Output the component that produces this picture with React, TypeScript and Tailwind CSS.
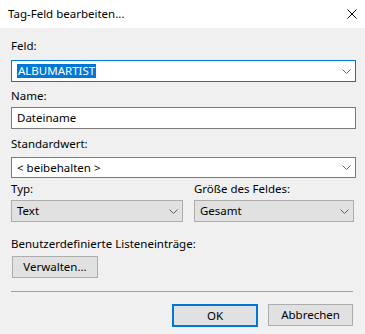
const FONT = "font-['Segoe_UI','Noto_Sans',sans-serif]";

function Chevron() {
  return (
    <svg width="9" height="5" viewBox="0 0 9 5" className="shrink-0">
      <path d="M0.5 0.5L4.5 4.5L8.5 0.5" fill="none" stroke="#606060" strokeWidth="1" />
    </svg>
  );
}

function Label({ children, className = "" }: { children: React.ReactNode; className?: string }) {
  return <div className={`h-4 text-[11.5px] leading-4 text-black ${className}`}>{children}</div>;
}

export default function App() {
  return (
    <div className={`w-[365px] h-[334px] bg-[#f0f0f0] ${FONT} text-[11.5px] text-black overflow-hidden`}>
      {/* Title bar */}
      <div className="flex h-[28px] items-center justify-between bg-white pl-2 pr-[8px]">
        <span className="text-[11.5px] leading-4">Tag-Feld bearbeiten...</span>
        <svg width="10" height="10" viewBox="0 0 10 10">
          <path d="M0.5 0.5L9.5 9.5M9.5 0.5L0.5 9.5" stroke="#000" strokeWidth="1" />
        </svg>
      </div>

      <div className="flex flex-col px-[11px] pt-[10px]">
        <Label>Feld:</Label>
        <div className="mt-[6px] flex h-[22px] w-[345px] items-center justify-between border border-[#0078d7] bg-white pl-[5px] pr-[4px]">
          <span className="bg-[#0078d7] px-[1px] leading-[14px] text-white">ALBUMARTIST</span>
          <Chevron />
        </div>

        <Label className="mt-[6px]">Name:</Label>
        <div className="mt-[3px] flex h-[22px] w-[345px] items-center border border-[#7a7a7a] bg-white pl-[5px]">
          Dateiname
        </div>

        <Label className="mt-[7px]">Standardwert:</Label>
        <div className="mt-[5px] flex h-[21px] w-[345px] items-center justify-between border border-[#7a7a7a] bg-white pl-[5px] pr-[4px]">
          <span>&lt; beibehalten &gt;</span>
          <Chevron />
        </div>

        <div className="mt-[3px] flex gap-[11px]">
          <div className="flex w-[173px] flex-col">
            <Label>Typ:</Label>
            <div className="mt-[3px] flex h-[22px] items-center justify-between border border-[#adadad] bg-[#e1e1e1] pl-[5px] pr-[4px]">
              <span>Text</span>
              <Chevron />
            </div>
          </div>
          <div className="flex w-[161px] flex-col">
            <Label>Größe des Feldes:</Label>
            <div className="mt-[3px] flex h-[22px] items-center justify-between border border-[#adadad] bg-[#e1e1e1] pl-[5px] pr-[4px]">
              <span>Gesamt</span>
              <Chevron />
            </div>
          </div>
        </div>

        <Label className="mt-[14px]">Benutzerdefinierte Listeneinträge:</Label>
        <button className="ml-[1px] mt-[4px] flex h-[22px] w-[86px] items-center justify-center border border-[#adadad] bg-[#e1e1e1] text-[11.5px]">
          Verwalten...
        </button>

        <div className="mt-[13px] h-px w-[342px] bg-[#a0a0a0]" />

        <div className="mt-[12px] flex justify-end gap-[10px] pr-[1px]">
          <button className="flex h-[23px] w-[86px] items-center justify-center border-2 border-[#0078d7] bg-[#e1e1e1] text-[11.5px]">
            OK
          </button>
          <button className="flex h-[22px] w-[85px] items-center justify-center border border-[#adadad] bg-[#e1e1e1] text-[11.5px]">
            Abbrechen
          </button>
        </div>
      </div>
    </div>
  );
}
